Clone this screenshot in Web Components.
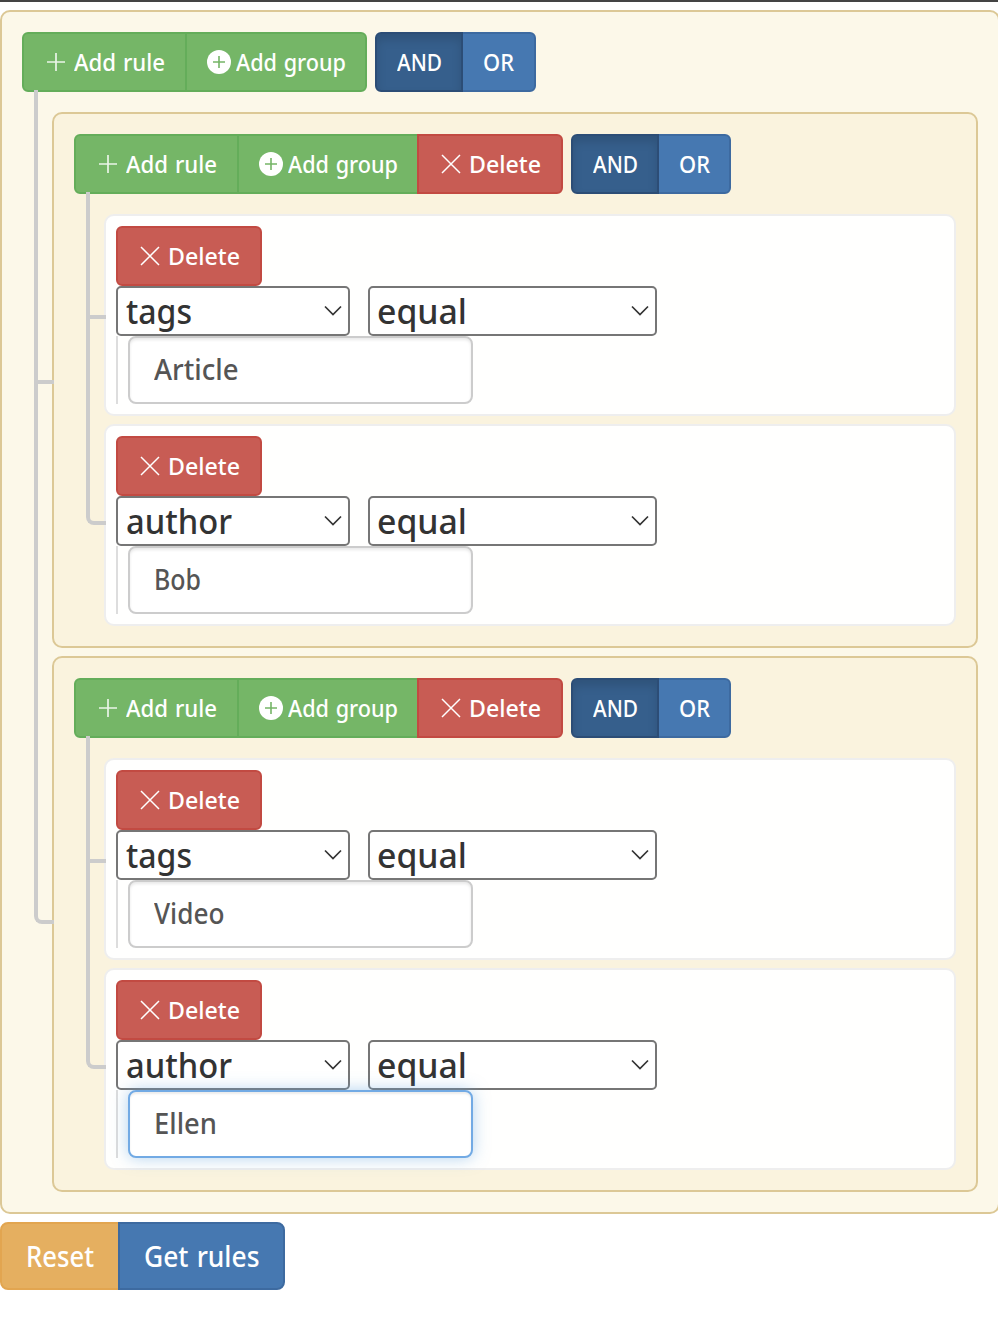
<!DOCTYPE html>
<html lang="en">
<head>
<meta charset="utf-8">
<title>Query builder</title>
<style>
html,body{margin:0;background:#fff;overflow:hidden;height:1336px}
body{font-family:"Noto Sans","Open Sans",sans-serif;color:#333}
</style>
</head>
<body>
<query-page></query-page>
<script>
const define=(name,css,html,setup)=>customElements.define(name,class extends HTMLElement{
  connectedCallback(){
    if(this.shadowRoot)return;
    this.attachShadow({mode:'open'}).innerHTML=`<style>*,*::before,*::after,:host{box-sizing:border-box}${css}</style>${html}`;
    if(setup)setup(this);
  }
});

/* Text run condensed or stretched to fill the width given in "w". */
define('fit-text',`:host{display:block;white-space:pre;flex:none}span{display:inline-block;transform-origin:0 50%;word-spacing:.05em}`,
`<span><slot></slot></span>`,el=>{
  const s=el.shadowRoot.querySelector('span'),w=+el.getAttribute('w');
  const natural=s.getBoundingClientRect().width;
  s.style.transform=`scaleX(${(w/natural).toFixed(4)})`;
  el.style.width=w+'px';
});

const icons={
  plus:'<svg width="20" height="20" viewBox="0 0 20 20"><path d="M10 1v18M1 10h18" stroke="#fff" stroke-opacity=".85" stroke-width="1.7" fill="none"/></svg>',
  circle:'<svg width="24" height="24" viewBox="0 0 24 24"><circle cx="12" cy="12" r="12" fill="#fff"/><path d="M12 6v12M6 12h12" stroke="#75b567" stroke-width="1.6" fill="none"/></svg>',
  cross:'<svg width="20" height="20" viewBox="0 0 20 20"><path d="M1 1l18 18M19 1L1 19" stroke="#fff" stroke-width="1.5" fill="none"/></svg>'
};
define('ui-icon',`:host{display:block;flex:none}svg{display:block}`,``,el=>{
  el.shadowRoot.innerHTML+=icons[el.getAttribute('name')];
});

define('ui-button',`
:host{display:flex;align-items:center;height:60px;border:2px solid;color:#fff;font-size:24px;font-weight:550;line-height:1;flex:none}
:host([kind=success]){background:#75b667;border-color:#64ad5a}
:host([kind=danger]){background:#c85c54;border-color:#c24a42}
:host([kind=primary]){background:#4678b1;border-color:#3d6aa0}
:host([kind=warning]){background:#e5af60;border-color:#e2a550}
:host([active]){background:#365f8c;border-color:#2c4d76;box-shadow:inset 0 6px 10px rgba(0,0,0,.125);position:relative;z-index:1}
:host([large]){height:68px;font-size:28px;font-weight:500}
`,`<slot></slot>`);

define('button-group',`
:host{display:flex;flex:none}
::slotted(ui-button:not(:first-child)){margin-left:-2px}
::slotted(ui-button:first-child){border-top-left-radius:6px;border-bottom-left-radius:6px}
::slotted(ui-button:last-child){border-top-right-radius:6px;border-bottom-right-radius:6px}
:host([large]) ::slotted(ui-button:first-child){border-top-left-radius:8px;border-bottom-left-radius:8px}
:host([large]) ::slotted(ui-button:last-child){border-top-right-radius:8px;border-bottom-right-radius:8px}
`,`<slot></slot>`);

const del=`<ui-button class="del" kind="danger"><ui-icon name="cross"></ui-icon><fit-text w="72">Delete</fit-text></ui-button>`;
const delCss=`.del{width:146px;padding-left:22px;gap:8px}`;

/* Connector lines, drawn in the gutter left of each child of a group. */
const tree=`
:host{position:relative}
:host::before,:host::after{content:"";position:absolute;left:-20px;width:20px;border:0 solid #ccc;border-left-width:4px}
:host::before{top:-24px;height:calc(50% + 28px);border-bottom-width:4px}
:host::after{top:50%;bottom:-12px}
:host([last])::before{top:-12px;height:calc(50% + 12px);border-bottom-left-radius:8px}
:host([last])::after,:host([root])::before,:host([root])::after{display:none}
`;

define('ui-select',`
:host{display:flex;align-items:center;justify-content:space-between;height:50px;border:2px solid #767676;border-radius:5px;background:#fff;padding:0 6px 2px 8px;font-size:35px;font-weight:500;line-height:1;color:#333}
svg{display:block;margin-top:2px}
`,`<slot></slot><svg width="18" height="12" viewBox="0 0 18 12"><path d="M1 1.5l8 8 8-8" fill="none" stroke="#333" stroke-width="1.7"/></svg>`);

define('ui-input',`
:host{display:flex;align-items:center;width:345px;height:68px;border:2px solid #ccc;border-radius:8px;background:#fff;padding:0 0 2px 24px;font-size:28px;font-weight:500;line-height:1;color:#555;box-shadow:inset 0 2px 3px rgba(0,0,0,.09)}
:host([focused]){border-color:#72aae4;box-shadow:inset 0 2px 2px rgba(0,0,0,.075),0 0 16px rgba(102,165,225,.5);position:relative}
`,`<slot></slot>`);

define('query-rule',`
:host{display:block;height:202px;border:2px solid #eee;border-radius:10px;background:rgba(255,255,255,.95);padding:10px}
${tree}${delCss}
.del{border-radius:6px}
.row{display:flex;gap:18px}
.field{width:234px}.op{width:289px;padding-left:7px}
.value{border-left:2px solid #ddd;padding-left:10px}
`,`${del}<div class="row"><ui-select class="field"><slot name="field"></slot></ui-select><ui-select class="op"><fit-text w="90">equal</fit-text></ui-select></div><div class="value"><slot name="value"></slot></div>`);

define('query-group',`
:host{display:block;border:2px solid #dcc896;border-radius:10px;background:#faf3de;padding:20px}
:host([root]){background:#fcf8e9}
${tree}${delCss}
.head{display:flex;gap:8px;margin-bottom:20px}
.body{display:flex;flex-direction:column;gap:8px;padding-left:30px}
.rule{width:165px;padding-left:22px;gap:8px}
.group{width:182px;padding-left:20px;gap:5px}
.and{width:88px;padding-left:20px}.or{width:75px;padding-left:20px}
:host(:not([root])) .or{width:74px}
:host([root]) .del{display:none}
:host([root]) .group{border-radius:0 6px 6px 0}
`,`<div class="head"><button-group>
<ui-button class="rule" kind="success"><ui-icon name="plus"></ui-icon><fit-text w="91">Add rule</fit-text></ui-button>
<ui-button class="group" kind="success"><ui-icon name="circle"></ui-icon><fit-text w="110">Add group</fit-text></ui-button>${del}
</button-group><button-group>
<ui-button class="and" kind="primary" active><fit-text w="45">AND</fit-text></ui-button>
<ui-button class="or" kind="primary"><fit-text w="31">OR</fit-text></ui-button>
</button-group></div><div class="body"><slot></slot></div>`);

define('query-page',`
:host{display:block}
.bar{height:2px;background:#444;margin-bottom:8px}
.root{width:1000px}
.actions{margin-top:8px}
.reset{width:120px;padding-left:24px}.get{width:167px;padding-left:24px}
`,`<div class="bar"></div>
<query-group class="root" root>
  <query-group>
    <query-rule><fit-text slot="field" w="66">tags</fit-text><ui-input slot="value"><fit-text w="84.5">Article</fit-text></ui-input></query-rule>
    <query-rule last><fit-text slot="field" w="106">author</fit-text><ui-input slot="value"><fit-text w="47">Bob</fit-text></ui-input></query-rule>
  </query-group>
  <query-group last>
    <query-rule><fit-text slot="field" w="66">tags</fit-text><ui-input slot="value"><fit-text w="70.5">Video</fit-text></ui-input></query-rule>
    <query-rule last><fit-text slot="field" w="106">author</fit-text><ui-input slot="value" focused><fit-text w="63">Ellen</fit-text></ui-input></query-rule>
  </query-group>
</query-group>
<button-group class="actions" large>
  <ui-button class="reset" kind="warning" large><fit-text w="68">Reset</fit-text></ui-button>
  <ui-button class="get" kind="primary" large><fit-text w="115.5">Get rules</fit-text></ui-button>
</button-group>`);
</script>
</body>
</html>
